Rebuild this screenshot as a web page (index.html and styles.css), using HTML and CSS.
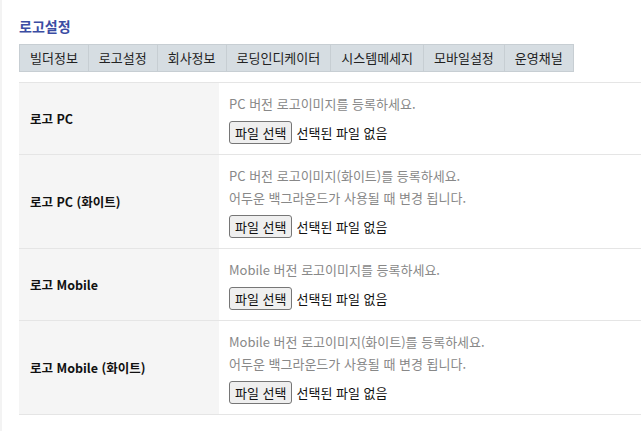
FILE: index.html
```html
<!DOCTYPE html>
<html lang="ko">
<head>
	<meta charset="UTF-8">
	<meta name="viewport" content="width=device-width">
	<title>로고설정</title>
	<link rel="stylesheet" href="styles.css">
</head>
<body>
<div class="wrap">
	<h2 class="title">로고설정</h2>

	<ul class="tabs">
		<li>빌더정보</li>
		<li class="on">로고설정</li>
		<li>회사정보</li>
		<li>로딩인디케이터</li>
		<li>시스템메세지</li>
		<li>모바일설정</li>
		<li>운영채널</li>
	</ul>

	<table class="form">
		<tr>
			<th>로고 PC</th>
			<td>
				<p class="help">PC 버전 로고이미지를 등록하세요.</p>
				<div class="file"><button>파일 선택</button><span>선택된 파일 없음</span></div>
			</td>
		</tr>
		<tr>
			<th>로고 PC (화이트)</th>
			<td>
				<p class="help">PC 버전 로고이미지(화이트)를 등록하세요.</p>
				<p class="help">어두운 백그라운드가 사용될 때 변경 됩니다.</p>
				<div class="file"><button>파일 선택</button><span>선택된 파일 없음</span></div>
			</td>
		</tr>
		<tr>
			<th>로고 Mobile</th>
			<td>
				<p class="help">Mobile 버전 로고이미지를 등록하세요.</p>
				<div class="file"><button>파일 선택</button><span>선택된 파일 없음</span></div>
			</td>
		</tr>
		<tr>
			<th>로고 Mobile (화이트)</th>
			<td>
				<p class="help">Mobile 버전 로고이미지(화이트)를 등록하세요.</p>
				<p class="help">어두운 백그라운드가 사용될 때 변경 됩니다.</p>
				<div class="file"><button>파일 선택</button><span>선택된 파일 없음</span></div>
			</td>
		</tr>
	</table>
</div>
</body>
</html>
```

FILE: styles.css
```css
html { height: 100%; }

body {
	margin: 0;
	height: 100%;
	font-size: 13px;
	font-family: "Noto Sans CJK KR", "Noto Sans", sans-serif;
	color: #222;
	background: #fff;
}

.wrap {
	min-height: 100%;
	box-sizing: border-box;
	border-left: 2px solid #f3f3f3;
	padding: 16px 1px 0 17px;
}

.title {
	margin: 0 0 8px 0;
	font-size: 14px;
	line-height: 20px;
	font-weight: bold;
	color: #3b4ca3;
}

.tabs {
	display: flex;
	margin: 0;
	padding: 0;
	list-style: none;
}

.tabs li {
	padding: 0 10px;
	line-height: 26px;
	background: #d6dde2;
	border: 1px solid #c7ced3;
	border-right: none;
	color: #222;
}

.tabs li:last-child { border-right: 1px solid #c7ced3; }

.form {
	width: 100%;
	margin-top: 10px;
	border-collapse: collapse;
}

.form tr { border-top: 1px solid #e5e5e5; border-bottom: 1px solid #e5e5e5; }

.form th {
	width: 189px;
	padding: 0 0 0 11px;
	background: #f5f5f5;
	text-align: left;
	font-size: 12.5px;
	font-weight: bold;
	color: #111;
}

.form td {
	padding: 10px;
	vertical-align: top;
}

.help {
	margin: 0;
	line-height: 22px;
	color: #888;
}

.help:last-of-type { margin-bottom: 6px; }

.file {
	display: flex;
	align-items: center;
	height: 23px;
}

.file button {
	height: 23px;
	padding: 0 5px;
	font-family: inherit;
	font-size: 13px;
	color: #111;
	background: #efefef;
	border: 1px solid #767676;
	border-radius: 3px;
}

.file span {
	margin-left: 4px;
	color: #111;
}
```
